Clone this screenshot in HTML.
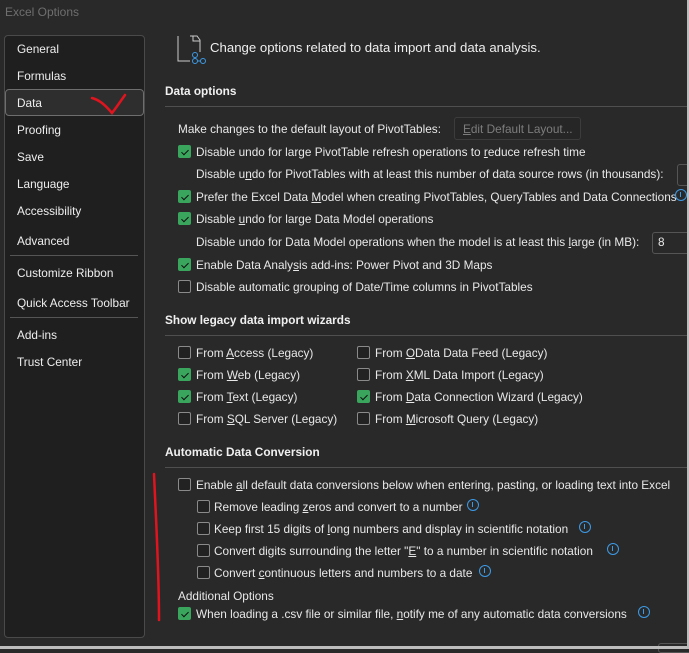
<!DOCTYPE html>
<html><head><meta charset="utf-8"><style>
*{margin:0;padding:0;box-sizing:border-box}
body{width:689px;height:649px;background:#292929;position:relative;overflow:hidden;font-family:"Liberation Sans",sans-serif;color:#e8e8e8;font-size:11.8px}
.a{position:absolute;white-space:nowrap;line-height:14px}
.side{position:absolute;left:4px;top:35px;width:141px;height:603px;background:#1f1f1f;border:1px solid #4a4a4a;border-radius:4px}
.si{position:absolute;left:17px;font-size:11.8px;color:#eee;line-height:14px}
.sel{position:absolute;left:5px;top:89px;width:139px;height:27px;background:#2e2e2e;border:1px solid #6e6e6e;border-radius:4px}
.sep{position:absolute;left:10px;width:128px;height:1px;background:#555}
.h{position:absolute;left:165px;font-weight:bold;font-size:11.8px;color:#f0f0f0;line-height:14px}
.ln{position:absolute;left:165px;right:0;height:1px;background:#4f4f4f}
.cb{position:absolute;width:13px;height:13px;border:1px solid #8a8a8a;border-radius:2px;background:#222}
.cb.on{background:#3aa55d;border-color:#3aa55d}
.cb.on::after{content:"";position:absolute;left:3.5px;top:1.5px;width:3px;height:6px;border:solid #111;border-width:0 1.3px 1.3px 0;transform:rotate(45deg)}
.i{position:absolute;width:12px;height:12px;border:1.3px solid #3c9be8;border-radius:50%}
.i::after{content:"";position:absolute;left:4.2px;top:2px;width:1.3px;height:5px;background:#3c9be8}
u{text-decoration:underline}
</style></head><body>
<div class="a" style="left:5px;top:5px;color:#6f6f6f;font-size:12px">Excel Options</div>
<div class="side"></div>
<div class="sel"></div>
<div class="si" style="top:42px">General</div>
<div class="si" style="top:69px">Formulas</div>
<div class="si" style="top:96px">Data</div>
<div class="si" style="top:123px">Proofing</div>
<div class="si" style="top:150px">Save</div>
<div class="si" style="top:177px">Language</div>
<div class="si" style="top:204px">Accessibility</div>
<div class="si" style="top:234px">Advanced</div>
<div class="sep" style="top:255px"></div>
<div class="si" style="top:266px">Customize Ribbon</div>
<div class="si" style="top:296px">Quick Access Toolbar</div>
<div class="sep" style="top:317px"></div>
<div class="si" style="top:328px">Add-ins</div>
<div class="si" style="top:355px">Trust Center</div>
<svg style="position:absolute;left:0;top:0" width="689" height="649">
<path d="M92 98 C100 100 106 106 112 113 C116 108 120 102 125 95" stroke="#e0141e" stroke-width="2.5" fill="none" stroke-linecap="round"/>
<path d="M154 474 C156 520 159 570 159 620" stroke="#e0141e" stroke-width="2.5" fill="none" stroke-linecap="round"/>
<path d="M178 36 V61 H190 M190 36 L197 36 L200 40 L200 52 M193 36 V41 H200" stroke="#ccc" fill="none" stroke-width="1"/>
<circle cx="195" cy="55" r="2.5" stroke="#3c9be8" fill="none"/><circle cx="195" cy="61" r="2.5" stroke="#3c9be8" fill="none"/><circle cx="203" cy="61" r="2.5" stroke="#3c9be8" fill="none"/>
<line x1="197.5" y1="61" x2="200.5" y2="61" stroke="#3c9be8"/>
</svg>
<div class="a" style="left:210px;top:41px;font-size:13.2px;color:#eee">Change options related to data import and data analysis.</div>
<div class="h" style="top:84px">Data options</div><div class="ln" style="top:106px"></div>
<div class="a" style="left:178px;top:122px">Make changes to the default layout of PivotTables:</div>
<div style="position:absolute;left:454px;top:117px;width:127px;height:23px;border:1px solid #3c3c3c;border-radius:3px;background:#262626"></div>
<div class="a" style="left:463px;top:122px;color:#7d7d7d"><u>E</u>dit Default Layout...</div>
<div class="cb on" style="left:178px;top:145px"></div><div class="a" style="left:196px;top:145px">Disable undo for large PivotTable refresh operations to <u>r</u>educe refresh time</div>
<div class="a" style="left:196px;top:167px">Disable u<u>n</u>do for PivotTables with at least this number of data source rows (in thousands):</div>
<div style="position:absolute;left:677px;top:164px;width:20px;height:22px;border:1px solid #555;border-radius:3px"></div>
<div class="cb on" style="left:178px;top:190px"></div><div class="a" style="left:196px;top:190px">Prefer the Excel Data <u>M</u>odel when creating PivotTables, QueryTables and Data Connections</div>
<div class="i" style="left:675px;top:189px"></div>
<div class="cb on" style="left:178px;top:212px"></div><div class="a" style="left:196px;top:212px">Disable <u>u</u>ndo for large Data Model operations</div>
<div class="a" style="left:196px;top:235px">Disable undo for Data Model operations when the model is at least this <u>l</u>arge (in MB):</div>
<div style="position:absolute;left:652px;top:232px;width:45px;height:22px;border:1px solid #555;border-radius:3px"></div>
<div class="a" style="left:658px;top:235px">8</div>
<div class="cb on" style="left:178px;top:258px"></div><div class="a" style="left:196px;top:258px">Enable Data Analy<u>s</u>is add-ins: Power Pivot and 3D Maps</div>
<div class="cb" style="left:178px;top:280px"></div><div class="a" style="left:196px;top:280px">Disable automatic <u>g</u>rouping of Date/Time columns in PivotTables</div>
<div class="h" style="top:313px">Show legacy data import wizards</div><div class="ln" style="top:335px"></div>
<div class="cb" style="left:178px;top:346px"></div><div class="a" style="left:196px;top:346px">From <u>A</u>ccess (Legacy)</div>
<div class="cb on" style="left:178px;top:368px"></div><div class="a" style="left:196px;top:368px">From <u>W</u>eb (Legacy)</div>
<div class="cb on" style="left:178px;top:390px"></div><div class="a" style="left:196px;top:390px">From <u>T</u>ext (Legacy)</div>
<div class="cb" style="left:178px;top:412px"></div><div class="a" style="left:196px;top:412px">From <u>S</u>QL Server (Legacy)</div>
<div class="cb" style="left:357px;top:346px"></div><div class="a" style="left:375px;top:346px">From <u>O</u>Data Data Feed (Legacy)</div>
<div class="cb" style="left:357px;top:368px"></div><div class="a" style="left:375px;top:368px">From <u>X</u>ML Data Import (Legacy)</div>
<div class="cb on" style="left:357px;top:390px"></div><div class="a" style="left:375px;top:390px">From <u>D</u>ata Connection Wizard (Legacy)</div>
<div class="cb" style="left:357px;top:412px"></div><div class="a" style="left:375px;top:412px">From <u>M</u>icrosoft Query (Legacy)</div>
<div class="h" style="top:445px">Automatic Data Conversion</div><div class="ln" style="top:467px"></div>
<div class="cb" style="left:178px;top:478px"></div><div class="a" style="left:196px;top:478px">Enable <u>a</u>ll default data conversions below when entering, pasting, or loading text into Excel</div>
<div class="cb" style="left:197px;top:500px"></div><div class="a" style="left:214px;top:500px">Remove leading <u>z</u>eros and convert to a number</div><div class="i" style="left:467px;top:499px"></div>
<div class="cb" style="left:197px;top:522px"></div><div class="a" style="left:214px;top:522px">Keep first 15 digits of <u>l</u>ong numbers and display in scientific notation</div><div class="i" style="left:579px;top:521px"></div>
<div class="cb" style="left:197px;top:544px"></div><div class="a" style="left:214px;top:544px">Convert digits surrounding the letter "<u>E</u>" to a number in scientific notation</div><div class="i" style="left:607px;top:543px"></div>
<div class="cb" style="left:197px;top:566px"></div><div class="a" style="left:214px;top:566px">Convert <u>c</u>ontinuous letters and numbers to a date</div><div class="i" style="left:479px;top:565px"></div>
<div class="a" style="left:178px;top:589px">Additional Options</div>
<div class="cb on" style="left:178px;top:607px"></div><div class="a" style="left:196px;top:607px">When loading a .csv file or similar file, <u>n</u>otify me of any automatic data conversions</div><div class="i" style="left:638px;top:606px"></div>
<div style="position:absolute;left:658px;top:643px;width:40px;height:10px;border:1px solid #555;border-radius:3px"></div>
<div style="position:absolute;left:0;top:646px;width:689px;height:3px;background:#bdbdbd"></div>
<div style="position:absolute;left:687px;top:0;width:2px;height:649px;background:#bdbdbd"></div>
</body></html>
